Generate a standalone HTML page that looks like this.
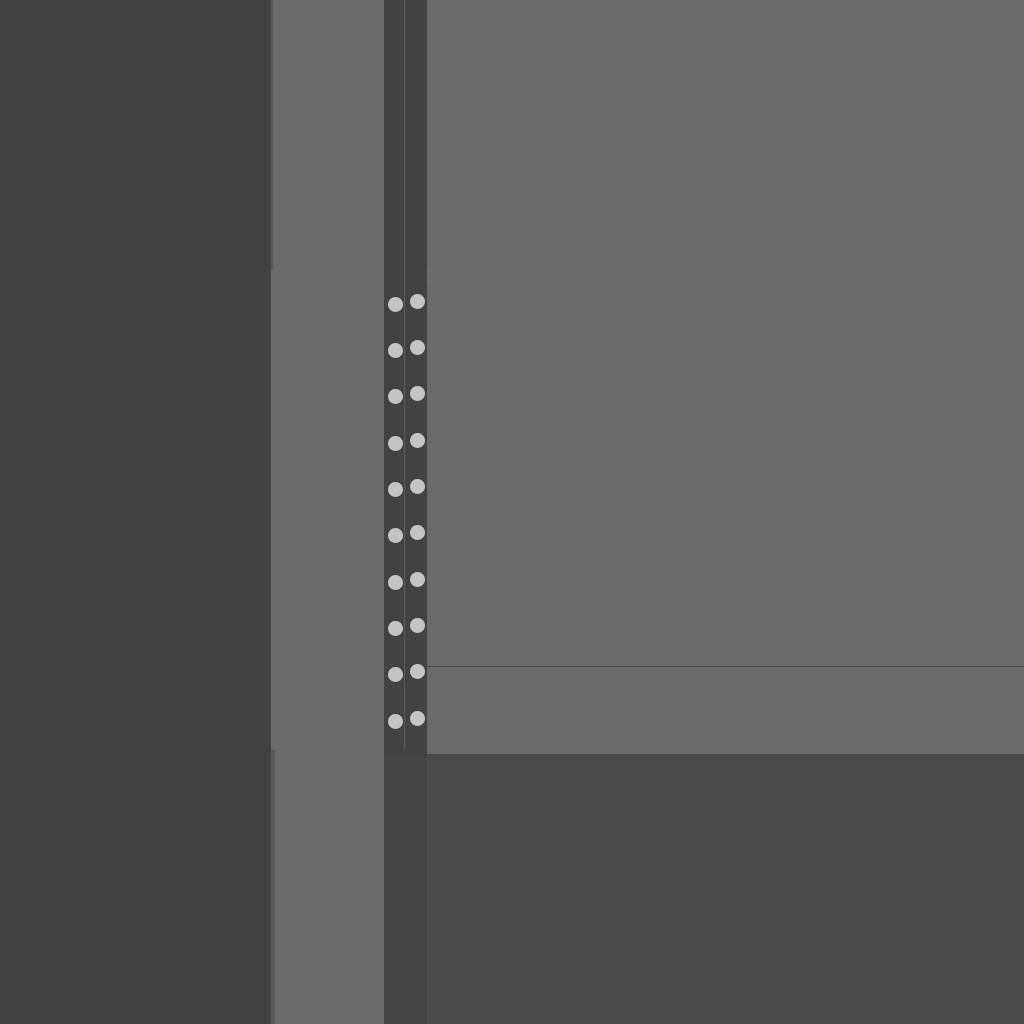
<!DOCTYPE html>
<html><head><meta charset="utf-8"><style>
html,body{margin:0;padding:0;width:1024px;height:1024px;overflow:hidden;background:#424242;position:relative}
div{position:absolute}
.d{width:15px;height:15px;border-radius:50%;background:#c4c4c4}
</style></head><body>
<div style="left:0;top:0;width:271px;height:1024px;background:#424242"></div>
<div style="left:271px;top:0;width:113px;height:1024px;background:#6c6c6c"></div>
<div style="left:271px;top:0;width:2px;height:270px;background:#5a5a5a"></div>
<div style="left:271px;top:750px;width:4px;height:274px;background:#5a5a5a"></div>
<div style="left:384px;top:0;width:43px;height:1024px;background:#424242"></div>
<div style="left:404px;top:0;width:1px;height:750px;background:#5c5c5c"></div>
<div style="left:427px;top:0;width:597px;height:754px;background:#6a6a6a"></div>
<div style="left:427px;top:270px;width:597px;height:12px;background:#6c6c6c"></div>
<div style="left:427px;top:666px;width:597px;height:1px;background:#4a4a4a"></div>
<div style="left:427px;top:754px;width:597px;height:270px;background:#4a4a4a"></div>
<div style="left:384px;top:754px;width:43px;height:270px;background:#444"></div>
<div id="dots"></div>
<script>
var h='';for(var i=0;i<10;i++){var y=296.5+i*46.35;h+='<div class="d" style="left:387.5px;top:'+y+'px"></div><div class="d" style="left:409.5px;top:'+(y-3)+'px"></div>';}
document.getElementById('dots').outerHTML=h;
</script>
</body></html>
